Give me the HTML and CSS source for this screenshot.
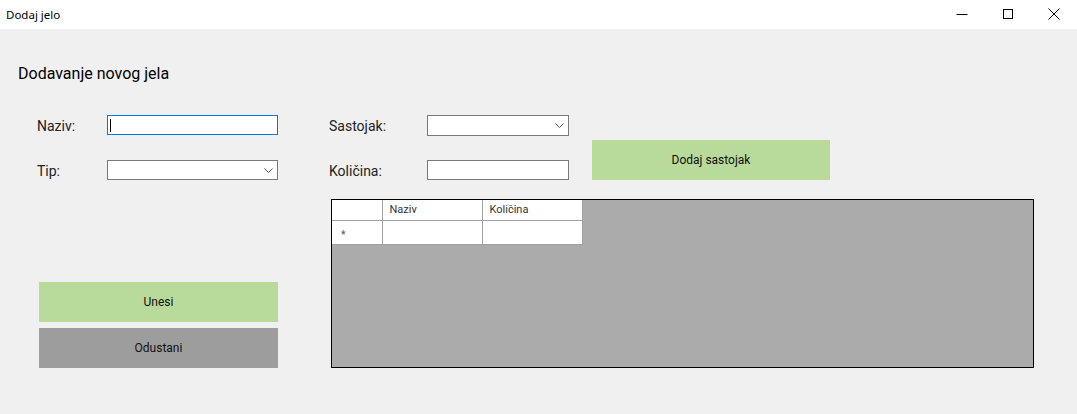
FILE: index.html
```html
<!DOCTYPE html>
<html lang="hr">
<head>
<meta charset="utf-8">
<title>Dodaj jelo</title>
<link rel="stylesheet" href="styles.css">
</head>
<body>
<div class="window">
  <div class="titlebar">
    <span class="title">Dodaj jelo</span>
    <div class="controls">
      <span class="ctl"><svg width="12" height="12" viewBox="0 0 12 12"><line x1="0.5" y1="6.5" x2="11.5" y2="6.5" stroke="#000" stroke-width="1"/></svg></span>
      <span class="ctl"><svg width="12" height="12" viewBox="0 0 12 12"><rect x="1.5" y="1.5" width="9" height="9" fill="none" stroke="#000" stroke-width="1"/></svg></span>
      <span class="ctl"><svg width="12" height="12" viewBox="0 0 12 12"><path d="M0.5 0.5 L11.5 11.5 M11.5 0.5 L0.5 11.5" stroke="#000" stroke-width="1" fill="none"/></svg></span>
    </div>
  </div>
  <div class="content">
    <h1 class="heading">Dodavanje novog jela</h1>
    <div class="main">
      <div class="left">
        <div class="field">
          <label class="lbl lbl-left">Naziv:</label>
          <div class="textbox focused"><span class="caret"></span></div>
        </div>
        <div class="field field-2">
          <label class="lbl lbl-left">Tip:</label>
          <div class="combo combo-left"><svg class="chev" width="9" height="5" viewBox="0 0 9 5"><path d="M0.5 0.5 L4.5 4.5 L8.5 0.5" fill="none" stroke="#555" stroke-width="1"/></svg></div>
        </div>
        <div class="actions">
          <button class="btn btn-green">Unesi</button>
          <button class="btn btn-gray">Odustani</button>
        </div>
      </div>
      <div class="right">
        <div class="top">
          <div class="fields">
            <div class="field">
              <label class="lbl lbl-right">Sastojak:</label>
              <div class="combo combo-right"><svg class="chev" width="9" height="5" viewBox="0 0 9 5"><path d="M0.5 0.5 L4.5 4.5 L8.5 0.5" fill="none" stroke="#555" stroke-width="1"/></svg></div>
            </div>
            <div class="field field-2">
              <label class="lbl lbl-right">Količina:</label>
              <div class="textbox textbox-right"></div>
            </div>
          </div>
          <button class="btn btn-green btn-add">Dodaj sastojak</button>
        </div>
        <div class="grid">
          <table class="dgv">
            <thead>
              <tr>
                <th class="rh"></th>
                <th class="col">Naziv</th>
                <th class="col">Količina</th>
              </tr>
            </thead>
            <tbody>
              <tr class="newrow">
                <td class="rh"><span class="star">*</span></td>
                <td></td>
                <td></td>
              </tr>
            </tbody>
          </table>
        </div>
      </div>
    </div>
  </div>
</div>
</body>
</html>
```
FILE: styles.css
```css
* { box-sizing: border-box; }
html, body {
  margin: 0;
  padding: 0;
  width: 1077px;
  height: 414px;
  overflow: hidden;
  background: #f0f0f0;
}
.window {
  width: 1077px;
  height: 414px;
  display: flex;
  flex-direction: column;
  font-family: Roboto, "Noto Sans", sans-serif;
  color: #000;
}
.titlebar {
  height: 29px;
  background: #fff;
  display: flex;
  align-items: center;
  justify-content: space-between;
  padding-left: 6px;
}
.title {
  font-family: "Noto Sans", "Open Sans", sans-serif;
  font-size: 11.5px;
  margin-top: -1px;
}
.controls {
  display: flex;
  height: 29px;
}
.ctl {
  width: 46px;
  height: 29px;
  display: flex;
  align-items: center;
  justify-content: center;
  padding-bottom: 2px;
}
.content {
  flex: 1;
  padding-left: 18px;
}
.heading {
  margin: 35px 0 0 0;
  font-weight: 400;
  font-size: 16px;
  line-height: 19px;
  height: 19px;
}
.main {
  display: flex;
  margin-top: 31px;
}
.left {
  width: 260px;
  padding-left: 19px;
  display: flex;
  flex-direction: column;
}
.field {
  display: flex;
  align-items: center;
  height: 22px;
}
.field-2 { margin-top: 23px; }
.lbl {
  font-size: 14px;
  color: #222;
  padding-top: 2px;
}
.lbl-left { width: 70px; }
.lbl-right { width: 98px; }
.textbox {
  width: 171px;
  height: 20px;
  background: #fff;
  border: 1px solid #7a7a7a;
  display: flex;
  align-items: center;
  padding-left: 2px;
}
.textbox.focused { border-color: #0078d7; }
.caret {
  width: 1px;
  height: 13px;
  background: #000;
}
.textbox-right { width: 142px; }
.combo {
  height: 21px;
  background: #fff;
  border: 1px solid #7a7a7a;
  display: flex;
  align-items: center;
  justify-content: flex-end;
  padding-right: 4px;
}
.combo-left { width: 171px; height: 20px; }
.combo-right { width: 142px; }
.chev { display: block; }
.actions {
  margin-top: 101px;
  margin-left: 2px;
  display: flex;
  flex-direction: column;
  gap: 6px;
}
.btn {
  width: 239px;
  height: 40px;
  border: none;
  font-family: Roboto, "Noto Sans", sans-serif;
  font-size: 12px;
  color: #111;
  padding: 0;
}
.btn-green { background: #b8db9c; }
.btn-gray { background: #9d9d9d; }
.right {
  margin-left: 51px;
  display: flex;
  flex-direction: column;
}
.top {
  display: flex;
}
.fields {
  width: 263px;
}
.btn-add {
  width: 238px;
  margin-top: 26px;
}
.grid {
  margin-top: 18px;
  margin-left: 2px;
  width: 703px;
  height: 169px;
  border: 1px solid #000;
  background: #ababab;
}
.dgv {
  border-collapse: collapse;
  font-size: 11px;
  font-family: Roboto, "Noto Sans", sans-serif;
}
.dgv th, .dgv td {
  background: #fff;
  border: 1px solid #a0a0a0;
  padding: 0;
}
.dgv tr:first-child th { border-top: none; }
.dgv th:first-child, .dgv td:first-child { border-left: none; }
.dgv th {
  height: 20px;
  font-weight: 400;
  text-align: left;
  padding-left: 7px;
  color: #333;
}
.dgv td { height: 24px; }
.dgv .rh { width: 50px; padding-left: 0; }
.dgv .col { width: 100px; }
.star {
  display: inline-block;
  margin-left: 9px;
  margin-top: 5px;
  font-size: 10px;
  color: #666;
  font-weight: 700;
}
```
